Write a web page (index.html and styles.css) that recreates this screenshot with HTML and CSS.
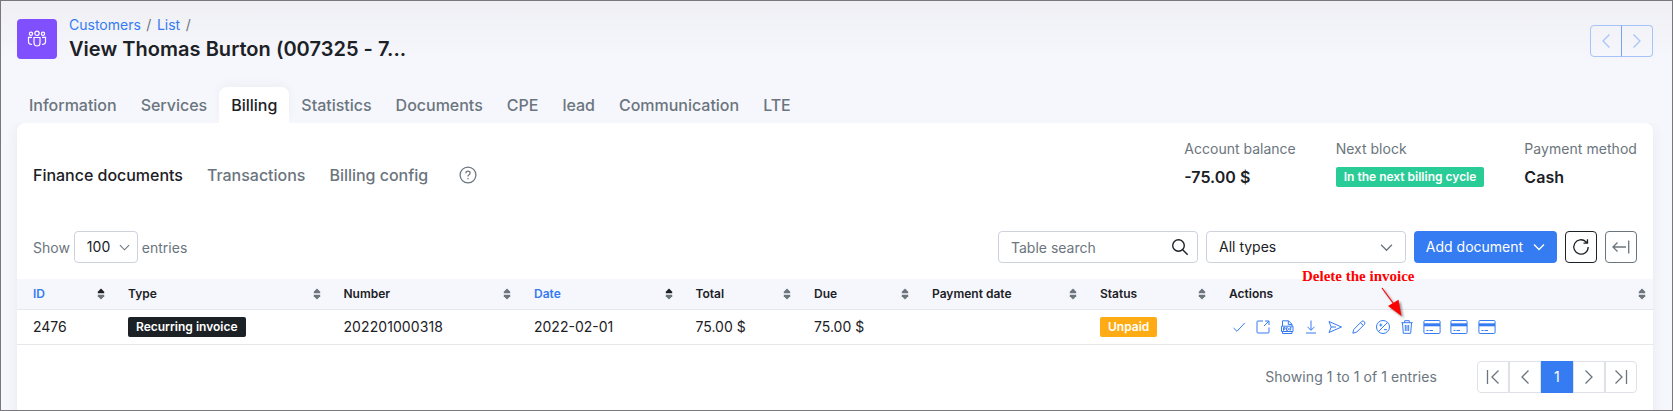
FILE: index.html
```html
<!DOCTYPE html>
<html lang="en">
<head>
<meta charset="utf-8">
<title>View Thomas Burton</title>
<link rel="stylesheet" href="styles.css">
</head>
<body>
<svg width="0" height="0" class="sprite">
  <symbol id="chev-down" viewBox="0 0 12 12"><path d="M1 3.500l5 5 5-5"/></symbol>
  <symbol id="chev-left" viewBox="0 0 16 16"><path d="M11.500 1.500L5 8l6.500 6.500"/></symbol>
  <symbol id="chev-right" viewBox="0 0 16 16"><path d="M4.500 1.500L11 8l-6.500 6.500"/></symbol>
  <symbol id="card" viewBox="0 0 18 16"><rect x=".9" y="1.500" width="16.200" height="13" rx="1.200"/><path d="M1 5.800h16" stroke-width="3"/><path d="M3.500 11.500h2M6.500 11.500h3.500" stroke-width="1.200"/></symbol>
  <symbol id="sort" viewBox="0 0 8 12"><path class="up" d="M4 .5l3.200 3.300v1.400H.8V3.800z"/><path class="down" d="M4 11.500l3.200-3.300V6.800H.8v1.400z"/></symbol>
</svg>
<div class="page">
  <header class="head">
    <div class="logo">
      <svg width="20" height="18" viewBox="0 0 20 18"><circle cx="10" cy="3.300" r="2.200"/><circle cx="4" cy="3.700" r="1.600"/><circle cx="16" cy="3.700" r="1.600"/><path d="M7 7.500h6v5.500a3 3 0 0 1-6 0zM5 7.300H1.500v4.500q0 2.700 3.500 2.700M15 7.300h3.500v4.500q0 2.700-3.500 2.700"/></svg>
    </div>
    <div class="titles">
      <div class="crumbs"><a>Customers</a><span>/</span><a>List</a><span>/</span></div>
      <h1>View Thomas Burton (007325 - 7...</h1>
    </div>
    <div class="pager">
      <button><svg width="16" height="16"><use href="#chev-left"/></svg></button>
      <button><svg width="16" height="16"><use href="#chev-right"/></svg></button>
    </div>
  </header>
  <nav class="tabs">
    <a>Information</a><a>Services</a><a class="active">Billing</a><a>Statistics</a><a>Documents</a><a>CPE</a><a>lead</a><a>Communication</a><a>LTE</a>
  </nav>
  <main class="card">
    <section class="summary">
      <nav class="subnav">
        <a class="active">Finance documents</a><a>Transactions</a><a>Billing config</a>
        <svg class="help" width="18" height="18" viewBox="0 0 18 18"><circle cx="9" cy="9" r="7.900"/><path d="M6.900 7.200q0-2 2.100-2t2.100 1.900q0 1.100-1.100 1.700t-1 1.700M9 12v1.300"/></svg>
      </nav>
      <div class="stat"><span>Account balance</span><b>-75.00 $</b></div>
      <div class="stat"><span>Next block</span><em class="badge green">In the next billing cycle</em></div>
      <div class="stat"><span>Payment method</span><b>Cash</b></div>
    </section>
    <section class="toolbar">
      <div class="length"><span class="label">Show</span> <span class="field count">100 <svg width="11" height="11"><use href="#chev-down"/></svg></span> <span class="label">entries</span></div>
      <div class="field search"><span class="label">Table search</span>
        <svg width="18" height="18" viewBox="0 0 18 18"><circle cx="7.500" cy="7.500" r="5.800"/><path d="M11.700 11.700l5 5"/></svg></div>
      <div class="field types">All types <svg width="13" height="13"><use href="#chev-down"/></svg></div>
      <button class="add">Add document <svg width="12" height="12"><use href="#chev-down"/></svg></button>
      <button class="square dark"><svg width="18" height="18" viewBox="0 0 18 18"><path d="M16.200 9a7.200 7.200 0 1 1-2.300-5.300l1.300 1.200M15.500 1.200v4h-4"/></svg></button>
      <button class="square"><svg width="18" height="18" viewBox="0 0 18 18"><path d="M16.700 2.500v13M14 9H1M5.500 4.500L1 9l4.500 4.500"/></svg></button>
    </section>
    <div class="table">
      <div class="row th">
        <div class="blue">ID<svg class="asc"><use href="#sort"/></svg></div>
        <div>Type<svg><use href="#sort"/></svg></div>
        <div>Number<svg><use href="#sort"/></svg></div>
        <div class="blue">Date<svg class="asc"><use href="#sort"/></svg></div>
        <div>Total<svg><use href="#sort"/></svg></div>
        <div>Due<svg><use href="#sort"/></svg></div>
        <div>Payment date<svg><use href="#sort"/></svg></div>
        <div>Status<svg><use href="#sort"/></svg></div>
        <div>Actions<svg><use href="#sort"/></svg></div>
      </div>
      <div class="row td">
        <div>2476</div>
        <div><em class="badge black">Recurring invoice</em></div>
        <div class="number">202201000318</div>
        <div>2022-02-01</div>
        <div>75.00 $</div>
        <div>75.00 $</div>
        <div></div>
        <div><em class="badge amber">Unpaid</em></div>
        <div class="actions">
          <svg viewBox="0 0 16 16"><path d="M2.500 9l3.500 3.300L13.700 4"/></svg>
          <svg viewBox="0 0 16 16"><path d="M8 2H3a1 1 0 0 0-1 1v10a1 1 0 0 0 1 1h10a1 1 0 0 0 1-1V8.500M10 2h4v4M14 2L9 7"/></svg>
          <svg viewBox="0 0 16 16"><path d="M3.500 7V1.800h6L13 5.200V7M9.300 2v3.500H13M3.500 12.500v2H13v-2M2.500 7.200h11.500v5.300H2.500z"/><path d="M4.500 11.700V8.600h1.600v1.600H4.500M7.600 8.600v3h.8l.9-.8V9.400l-.9-.8zM11 11.700v-3h1.600M11 10.200h1.300"/></svg>
          <svg viewBox="0 0 16 16"><path d="M8 1.500v9.500M4.500 7.800L8 11.300l3.500-3.500M3 14h10"/></svg>
          <svg viewBox="0 0 16 16"><path d="M2 2.500L14.500 8 2 13.500 4.200 8zM4.200 8H9"/></svg>
          <svg viewBox="0 0 16 16"><path d="M1.800 14.200l1-3.800 8-8q1.300-1 2.500.3t.3 2.500l-8 8zM9.500 3.700l2.800 2.800"/></svg>
          <svg viewBox="0 0 16 16"><circle cx="8" cy="8" r="6.500"/><path d="M3.500 12.500l9-9M4.300 6h3M5.800 4.500v3M9 10.700h3"/></svg>
          <svg viewBox="0 0 16 16"><path d="M2.300 3.700h11.400M5.700 3.500V1.700h4.600v1.800M3.500 4l.8 10.300h7.400L12.500 4M6.300 6v6M8 6v6M9.700 6v6"/></svg>
          <svg class="cc"><use href="#card"/></svg>
          <svg class="cc"><use href="#card"/></svg>
          <svg class="cc"><use href="#card"/></svg>
        </div>
      </div>
    </div>
    <footer class="foot">
      <span>Showing 1 to 1 of 1 entries</span>
      <div class="pages">
        <a><svg width="16" height="16" viewBox="0 0 16 16"><path d="M2.500 1v14M13.500 1.500L7 8l6.500 6.500"/></svg></a>
        <a><svg width="16" height="16"><use href="#chev-left"/></svg></a>
        <a class="on">1</a>
        <a><svg width="16" height="16"><use href="#chev-right"/></svg></a>
        <a><svg width="16" height="16" viewBox="0 0 16 16"><path d="M13.500 1v14M2.500 1.500L9 8l-6.500 6.500"/></svg></a>
      </div>
    </footer>
  </main>
  <div class="note">Delete the invoice
    <svg width="30" height="34" viewBox="0 0 30 34"><path d="M2 1l14 19" stroke="#f00" stroke-width="1.200"/><path d="M21.500 29L8 19l10.500-6.300z" fill="#f00"/></svg>
  </div>
</div>
</body>
</html>
```
FILE: styles.css
```css
* { box-sizing: border-box; }
body { margin: 0; font: 14px/20px Inter, sans-serif; color: #1c2126; }
svg { fill: none; stroke: currentColor; flex: none; }
.sprite { position: absolute; }
.page {
  position: relative;
  height: 411px;
  padding: 18px 19px 0 16px;
  border: 1px solid #77777c;
  background: linear-gradient(#efeff4, #f6f7fc 60px);
  overflow: hidden;
}
.head { display: flex; height: 68px; }
.logo { width: 40px; height: 40px; border-radius: 4px; background: #8050ff; color: #fff; display: grid; place-items: center; }
.logo svg { stroke-width: 1.200; }
.titles { margin-left: 12px; flex: 1; }
.crumbs { display: flex; gap: 5.500px; margin-top: -4px; color: #6b757e; }
.crumbs a { color: #357bf2; }
h1 { margin: 0; font-size: 20px; line-height: 28px; font-weight: 600; letter-spacing: .03px; }
.pager { display: flex; padding-top: 6px; }
.pager button { width: 32px; height: 32px; padding: 0; border: 1px solid #a5c4f8; border-radius: 4px 0 0 4px; background: none; color: #a5c4f8; display: grid; place-items: center; }
.pager svg { stroke-width: 1.300; }
.pager button + button { margin-left: -1px; border-left-color: #78a5ee; border-radius: 0 4px 4px 0; }
.tabs { display: flex; height: 36px; font-size: 16px; font-weight: 500; color: #6b757e; letter-spacing: -.01px; }
.tabs a { padding: 0 12px; line-height: 36px; }
.tabs .active { background: #fff; color: #1c2126; border-radius: 8px 8px 0 0; box-shadow: 0 -3px 10px rgba(40, 50, 90, .04); }
.card { height: 300px; background: #fff; border-radius: 8px 8px 0 0; box-shadow: 0 2px 14px rgba(40, 50, 90, .07); clip-path: inset(0 -20px); }
.summary { display: flex; height: 108px; padding: 16px 16px 0; gap: 40px; }
.subnav { display: flex; gap: 24px; flex: 1; font-size: 16px; font-weight: 500; color: #6b757e; padding-top: 26px; letter-spacing: -.02px; }
.subnav .active { color: #1c2126; }
.help { margin: 1px 0 0 7px; stroke-width: 1.300; }
.stat { color: #6b757e; }
.stat:last-child { letter-spacing: .05px; }
.stat > * { display: block; }
.stat b { font-size: 16px; font-weight: 600; color: #1c2126; margin-top: 8px; }
.stat .badge { margin-top: 8px; }
.badge { display: inline-block; height: 20px; padding: 0 8px; border-radius: 2px; font-size: 12px; font-style: normal; font-weight: 600; line-height: 20px; color: #fff; }
.green { background: #29cb97; }
.black { background: #1c2126; }
.amber { background: #ffac14; }
.toolbar { display: flex; gap: 8px; height: 48px; padding: 0 16px; }
.toolbar > * { height: 32px; }
.length { display: flex; align-items: center; gap: 4px; flex: 1; color: #6b757e; }
.label { padding-top: 2px; }
.field { display: flex; align-items: center; justify-content: space-between; height: 32px; border: 1px solid #cdd2dc; border-radius: 4px; padding: 0 12px; background: #fff; color: #1c2126; }
.field svg { color: #6b757e; stroke-width: 1.200; }
.count { width: 64px; padding: 0 7px 0 12px; }
.search { width: 200px; color: #6b757e; padding-right: 8px; }
.search svg { color: #1c2126; stroke-width: 1.400; }
.types { width: 200px; }
.add, .square { font: inherit; border: 0; border-radius: 4px; display: flex; align-items: center; justify-content: center; padding: 0; }
.add { width: 143px; gap: 10px; background: #357bf2; color: #fff; }
.add svg { stroke-width: 1.300; }
.square { width: 32px; border: 1px solid #6b757e; background: #fff; color: #6b757e; }
.square.dark { border-color: #1c2126; color: #1c2126; }
.square svg { stroke-width: 1.300; }
.row { display: grid; grid-template-columns: 95px 215.500px 190.500px 161.500px 118.500px 118px 168px 129px 1fr; border-bottom: 1px solid #e5e7ea; }
.row > div { display: flex; align-items: center; padding-left: 16px; }
.th { height: 31px; background: #f6f7fc; font-size: 12px; font-weight: 600; }
.th > div { justify-content: space-between; padding-right: 7px; }
.th svg { width: 8px; height: 12px; stroke: none; }
.th .asc { --up: #1c2126; }
.up { fill: var(--up, #6b757e); }
.down { fill: #6b757e; }
.blue { color: #357bf2; }
.td { height: 35px; }
.number { letter-spacing: .08px; }
.td .actions { gap: 8px; padding-left: 18px; color: #357bf2; }
.actions svg { width: 16px; height: 16px; }
.actions .cc { width: 18px; margin: 0 2px 0 -.5px; }
.foot { display: flex; align-items: center; justify-content: flex-end; gap: 40px; padding: 16px 16px 0; color: #6b757e; letter-spacing: .08px; }
.pages { display: flex; }
.pages svg { stroke-width: 1.300; }
.pages a { width: 32px; height: 32px; display: grid; place-items: center; border: 1px solid #dee2e8; }
.pages a:first-child { border-radius: 4px 0 0 4px; }
.pages a:last-child { border-radius: 0 4px 4px 0; }
.pages .on { background: #357bf2; border-color: #357bf2; color: #fff; }
.note { position: absolute; left: 1301px; top: 265px; font: bold 15px/20px "Liberation Serif", serif; color: #f00; white-space: nowrap; }
.note svg { position: absolute; left: 78px; top: 21px; stroke: none; filter: drop-shadow(2px 2px 1px rgba(0, 0, 0, .4)); }
```
